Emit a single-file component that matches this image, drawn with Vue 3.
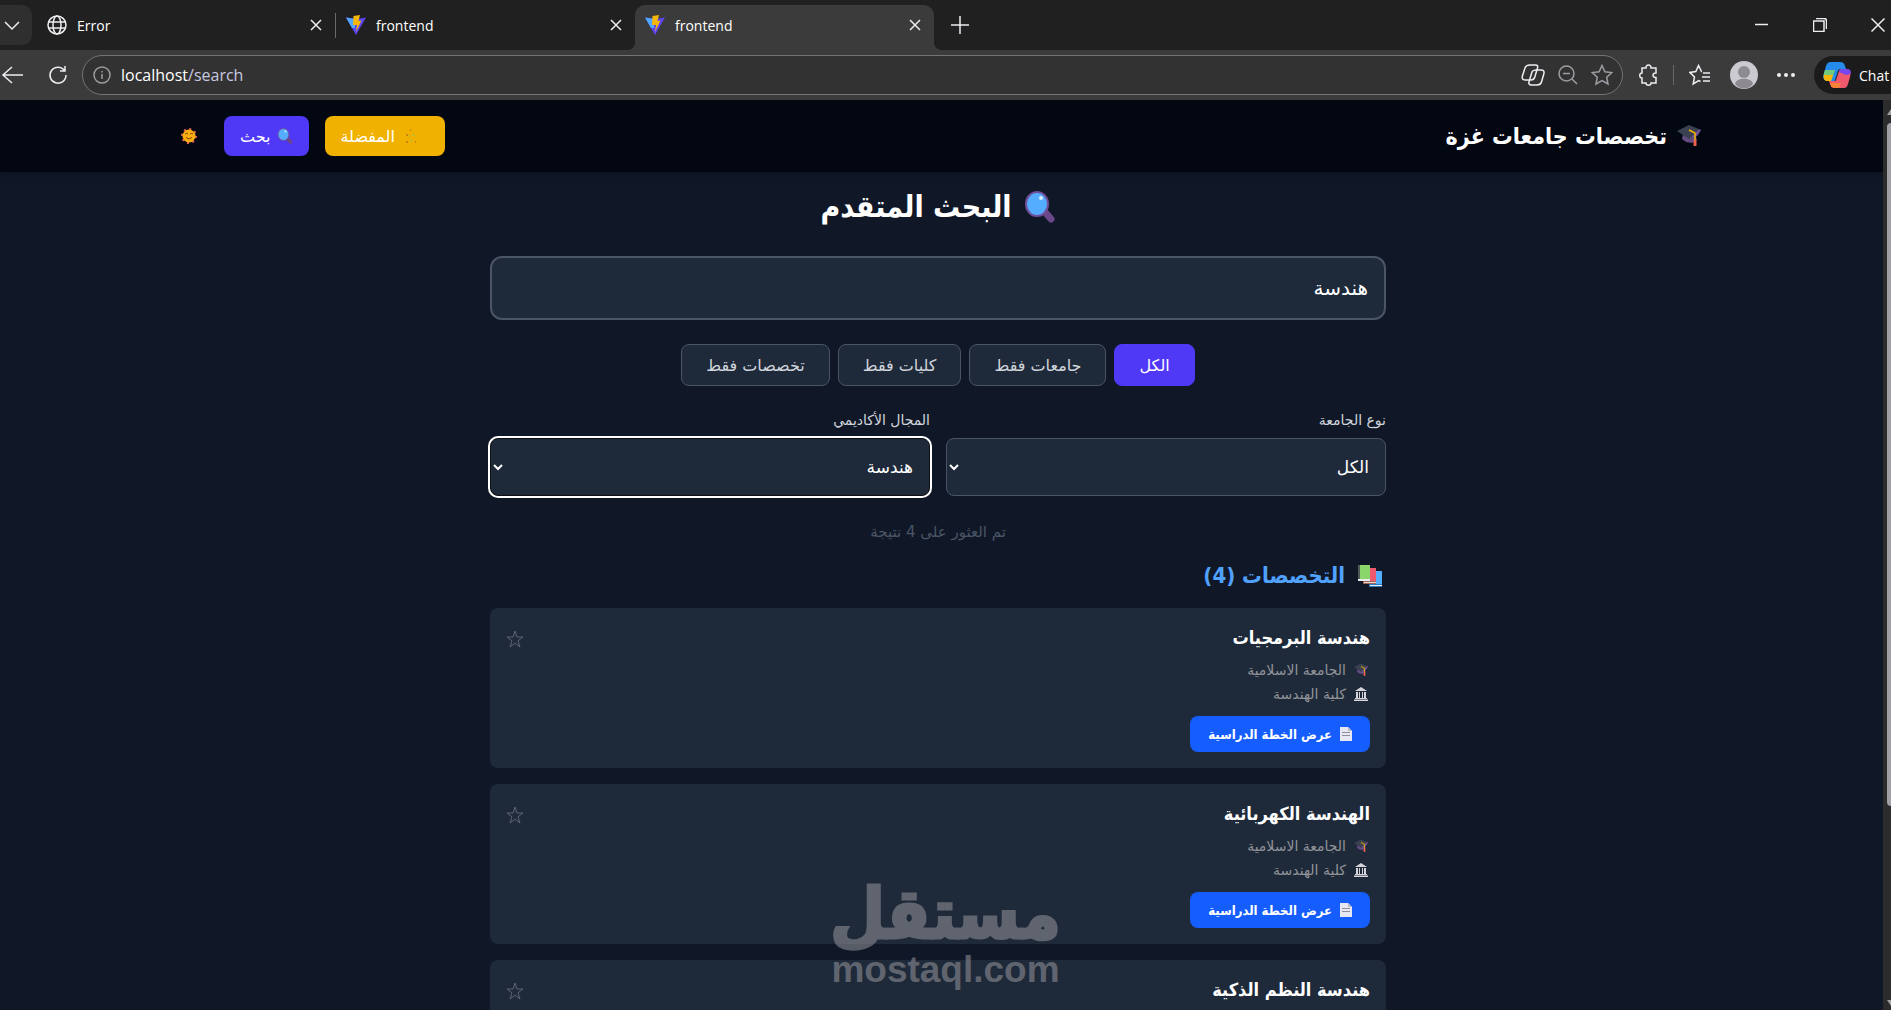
<template>
  <div class="browser">
    <div class="tabstrip">
      <button class="tab-menu" aria-label="Tab actions">
        <svg width="16" height="16" viewBox="0 0 16 16"><path d="M1 5l7 7 7-7" /></svg>
      </button>
      <div v-for="(tab, i) in tabs" :key="i" class="tab" :class="{ active: tab.active, divided: tab.divided }">
        <svg v-if="tab.icon === 'globe'" class="favicon" viewBox="0 0 20 20">
          <circle cx="10" cy="10" r="9" />
          <ellipse cx="10" cy="10" rx="4" ry="9" />
          <path d="M2 7h16M2 13h16" />
        </svg>
        <svg v-else class="favicon vite" viewBox="0 0 20 20">
          <path d="M0 2.500L10 20 20 2.500 11 4z" fill="#5b45f0" />
          <path d="M0 2.500L9 4 9 13 6 13z" fill="#51a8ff" />
          <path d="M7.500 1L14 0l-1.500 6 3-.5L10 17l1-7H7z" fill="#f5b50a" />
        </svg>
        <span class="tab-title">{{ tab.title }}</span>
        <button class="tab-close" aria-label="Close tab">
          <svg width="12" height="12" viewBox="0 0 12 12"><path d="M1 1l10 10M11 1L1 11" /></svg>
        </button>
      </div>
      <button class="new-tab" aria-label="New tab">
        <svg width="20" height="20" viewBox="0 0 20 20"><path d="M10 1v18M1 10h18" /></svg>
      </button>
      <div class="window-controls">
        <button aria-label="Minimize"><svg width="14" height="14" viewBox="0 0 14 14"><path d="M0 6.500h13" /></svg></button>
        <button aria-label="Restore">
          <svg width="14" height="14" viewBox="0 0 14 14"><path d="M.5 3h10.500v10.500H.5zM3 .5h8q2.500 0 2.500 2.500v8" /></svg>
        </button>
        <button aria-label="Close"><svg width="14" height="14" viewBox="0 0 14 14"><path d="M.5.500l13 13M13.500.500l-13 13" /></svg></button>
      </div>
    </div>

    <div class="toolbar">
      <button class="tool back" aria-label="Back">
        <svg width="24" height="20" viewBox="0 0 24 20"><path d="M12 2L3 10l9 8M3 10h20" /></svg>
      </button>
      <button class="tool reload" aria-label="Reload">
        <svg width="20" height="20" viewBox="0 0 20 20"><path d="M16.500 5.500A8 8 0 1 0 18 10M17 1v5h-5" /></svg>
      </button>
      <div class="address">
        <svg class="info" width="18" height="18" viewBox="0 0 18 18"><circle cx="9" cy="9" r="8" /><path d="M9 8v5M9 5v1.500" /></svg>
        <span class="url">localhost<span>/search</span></span>
        <svg width="24" height="22" viewBox="0 0 24 22">
          <path d="M9 1h5.500c2 0 2.500 1 2 3l-2.700 9c-.6 2-1.800 3-3.800 3H4c-2.500 0-3.200-1.500-2.600-4L4 4c.6-2 2-3 5-3z" />
          <path d="M16 6h4c2.800 0 3.500 1.500 2.800 4L20.500 18c-.6 2-2 3-4.500 3h-5.500c-2.500 0-3-1.500-2.400-3.500L11 8c.5-1.500 1.500-2 5-2z" />
        </svg>
        <svg class="dim" width="20" height="20" viewBox="0 0 20 20"><circle cx="8.500" cy="8.500" r="7.500" /><path d="M14 14l5 5M5 8.500h7" /></svg>
        <svg class="dim" width="22" height="22" viewBox="0 0 22 22"><path d="M11 1.500l2.900 6.300 6.800.8-5 4.600 1.300 6.800-6-3.400L5 20l1.300-6.800-5-4.600 6.800-.8z" /></svg>
      </div>
      <button class="tool" aria-label="Extensions">
        <svg width="20" height="22" viewBox="0 0 20 22">
          <path d="M3 4h4c-.5-4 5.500-4 5 0h5v5c-4-.5-4 5 0 4.500V19h-5c.5 3-5.500 3-5 0H3v-5c-3 .3-3-5.300 0-5z" />
        </svg>
      </button>
      <i class="tool-divider"></i>
      <button class="tool" aria-label="Favorites">
        <svg width="22" height="22" viewBox="0 0 22 22"><path d="M13 7.500h-.5L9.500 1.500 6.800 7.500.800 8.400l4.700 4.500L4.200 20l5.500-3.500 1.800 1M14 9h7M13 13h8M14 17h7" /></svg>
      </button>
      <button class="tool" aria-label="Profile">
        <svg class="avatar" width="28" height="28" viewBox="0 0 28 28">
          <circle cx="14" cy="14" r="14" fill="#cbcad0" />
          <circle cx="14" cy="11" r="6" fill="#8d8b91" />
          <path d="M5 23c1-7 17-7 18 0-5 6-13 6-18 0z" fill="#8d8b91" />
        </svg>
      </button>
      <button class="tool" aria-label="Settings">
        <svg width="18" height="4" viewBox="0 0 18 4"><g fill="#ededf2" stroke="none"><circle cx="2" cy="2" r="2" /><circle cx="9" cy="2" r="2" /><circle cx="16" cy="2" r="2" /></g></svg>
      </button>
      <button class="chat">
        <svg width="28" height="28" viewBox="0 0 28 28">
          <path d="M8 1h9c3 0 4 1 5 4l1 3h-6c-1 0-2 1-2 2l-3 9c0 1-1 1-2 1H5c-5 0-5-4-4-8l2-7c1-3 2-4 5-4z" fill="#258bea" />
          <path d="M2 9h10l-2 6-2 5H5c-5 0-5-4-4-8z" fill="#72ca7c" />
          <path d="M1 14h9l-2 6H5c-3 0-5-2-4-6z" fill="#f5b50a" />
          <path d="M19 8h4c5 0 5 4 4 8l-2 7c-1 3-2 4-4 4h-9c-3 0-4-1-5-4l-1-3h5c1 0 2 0 2-1l3-9c0-1 1-2 3-2z" fill="#ef596d" />
          <path d="M19 8h4c5 0 5 2 4.500 5L23 14l-7-3c0-2 1-3 3-3z" fill="#7746ee" />
          <path d="M7 22h11l-2 5h-4c-3 0-4-2-5-5z" fill="#f68235" />
        </svg>
        <span>Chat</span>
      </button>
    </div>

    <div class="viewport">
      <div class="page" dir="rtl" lang="ar">
        <header class="navbar">
          <div class="navbar-inner">
            <a class="brand" href="#">
              <svg width="24" height="24" viewBox="0 0 24 24"><use href="#cap" /></svg>
              <span>تخصصات جامعات غزة</span>
            </a>
            <nav>
              <a class="nav-btn fav" href="#">
                <svg width="16" height="16" viewBox="0 0 16 16">
                  <path d="M3 6l2 2M7 2h1M3 14h2M12 14h1" stroke="#9a5a1a" fill="none" />
                  <path d="M11 6l-1 2M6 8h1M7 13h2" stroke="#8fc46a" fill="none" />
                </svg>
                <span>المفضلة</span>
              </a>
              <a class="nav-btn search" href="#">
                <svg width="16" height="16" viewBox="0 0 32 32"><use href="#lens" /></svg>
                <span>بحث</span>
              </a>
              <button class="theme" aria-label="تبديل المظهر">
                <svg width="16" height="16" viewBox="0 0 16 16">
                  <circle cx="8" cy="8" r="7" fill="none" stroke="#f0605a" stroke-width="2" stroke-dasharray="2 3.500" />
                  <circle cx="8" cy="8" r="6.500" fill="#f8b010" />
                  <path d="M4 6q1.500-1.500 3 0M9 6q1.500-1.500 3 0M5 9.500q3 3 6 0" stroke="#85400f" fill="none" />
                </svg>
              </button>
            </nav>
          </div>
        </header>

        <main>
          <h1>
            <svg width="32" height="32" viewBox="0 0 32 32"><use href="#lens" /></svg>
            <span>البحث المتقدم</span>
          </h1>

          <input v-model="query" class="search-box" type="text" aria-label="بحث" />

          <div class="filters">
            <button v-for="f in filters" :key="f" :class="{ selected: f === filter }" @click="filter = f">{{ f }}</button>
          </div>

          <div class="selects">
            <div class="field">
              <label for="uni-type">نوع الجامعة</label>
              <select id="uni-type" v-model="uniType"><option>الكل</option></select>
            </div>
            <div class="field">
              <label for="area">المجال الأكاديمي</label>
              <select id="area" v-model="area" class="focused"><option>هندسة</option></select>
            </div>
          </div>

          <p class="count">تم العثور على 4 نتيجة</p>

          <h2>
            <svg width="26" height="24" viewBox="0 0 26 24">
              <path d="M12 7h13v14H12z" fill="#54adff" /><path d="M12 20h13v3H12z" fill="#267abd" /><path d="M13 21h12v1H13z" fill="#e9edf2" />
              <path d="M6 4h13v14H6z" fill="#ef596d" /><path d="M6 17h13v3H6z" fill="#9b6558" /><path d="M7 18h12v1H7z" fill="#e9d8d5" />
              <path d="M1 1h12v14H1z" fill="#8bd66a" /><path d="M1 1h2v15H1z" fill="#4d5a55" /><path d="M1 15h12v2H1z" fill="#e9edf2" />
            </svg>
            <span>التخصصات (4)</span>
          </h2>

          <article v-for="m in majors" :key="m" class="card">
            <div class="card-body">
              <h3>{{ m }}</h3>
              <p class="meta">
                <svg width="14" height="14" viewBox="0 0 24 24"><use href="#cap" /></svg>
                <span>الجامعة الاسلامية</span>
              </p>
              <p class="meta">
                <svg width="14" height="14" viewBox="0 0 14 14">
                  <path d="M7 0l6 4H1zM2 5h2v6H2zM5 5h1v6H5zM8 5h1v6H8zM10 5h2v6h-2zM1 11h12v1H1zM0 12.500h14V14H0z" fill="#d5d4da" />
                </svg>
                <span>كلية الهندسة</span>
              </p>
              <a class="plan" href="#">
                <svg width="12" height="14" viewBox="0 0 12 14">
                  <path d="M0 0h8l4 4v10H0z" fill="#e6e7f3" /><path d="M8 0v4h4z" fill="#b8bacb" /><path d="M2 5.500h8M2 8.500h8" stroke="#8b8e9d" />
                </svg>
                <span>عرض الخطة الدراسية</span>
              </a>
            </div>
            <button class="star" aria-label="إضافة إلى المفضلة">
              <svg width="18" height="18" viewBox="0 0 18 18"><path d="M9 1l1.900 6H17l-5 3.800 2 6.200-5-3.800L4 17l2-6.200L1 7h6.100z" /></svg>
            </button>
          </article>
        </main>
      </div>
      <div class="scrollbar"><i class="up"></i><i class="thumb"></i><i class="down"></i></div>
    </div>

    <div class="watermark">
      <span class="ar" lang="ar">مستقل</span>
      <span class="en">mostaql.com</span>
    </div>

    <!-- shared symbols -->
    <svg class="symbols" aria-hidden="true">
      <symbol id="cap" viewBox="0 0 24 24">
        <path d="M6 10h12l2 6-5 3-6-1-4-3z" fill="#634a80" />
        <path d="M0 7l12-6 12 5-4 6-8 3z" fill="#3a4150" />
        <path d="M12 15l8-3 4-6-2-.5-8 8z" fill="#74539a" />
        <path d="M12 6l6 3v8" stroke="#f8b500" stroke-width="1.500" fill="none" />
        <path d="M16.500 16h3v6h-3z" fill="#ef6050" />
      </symbol>
      <symbol id="lens" viewBox="0 0 32 32">
        <path d="M21 21l6 7" stroke="#6b478a" stroke-width="7" stroke-linecap="round" />
        <ellipse cx="13" cy="13" rx="11" ry="12" fill="#54adff" stroke="#70509a" stroke-width="2" />
        <circle cx="17" cy="7" r="2" fill="#d8edff" />
      </symbol>
    </svg>
  </div>
</template>

<script setup>
import { ref } from 'vue'

const tabs = [
  { title: 'Error', icon: 'globe', divided: true },
  { title: 'frontend', icon: 'vite' },
  { title: 'frontend', icon: 'vite', active: true },
]

const query = ref('هندسة')
const uniType = ref('الكل')
const area = ref('هندسة')

const filters = ['الكل', 'جامعات فقط', 'كليات فقط', 'تخصصات فقط']
const filter = ref('الكل')

const majors = ['هندسة البرمجيات', 'الهندسة الكهربائية', 'هندسة النظم الذكية']
</script>

<style>
body { margin: 0; background: #101828; }
</style>

<style scoped>
* { box-sizing: border-box; }

button, input, select { font: inherit; }
button { border: 0; background: none; padding: 0; color: inherit; cursor: pointer; }
a { color: inherit; text-decoration: none; }
h1, h2, h3, p { margin: 0; }
svg { flex: none; }

.browser {
  position: relative;
  display: flex;
  flex-direction: column;
  height: 100vh;
  overflow: hidden;
  font-family: "Open Sans", "Noto Sans", sans-serif;
  color: #fff;
}
.symbols { position: absolute; width: 0; height: 0; }

/* browser chrome */
.tabstrip {
  display: flex;
  align-items: center;
  height: 50px;
  background: #202020;
  flex: none;
}
.tabstrip svg, .toolbar svg { fill: none; stroke: #ededf2; stroke-width: 1.5; display: block; }
.tabstrip .vite, .toolbar .chat svg, .toolbar .avatar { stroke: none; }

.tab-menu {
  width: 32px;
  height: 40px;
  padding-left: 4px;
  border-radius: 0 10px 10px 0;
  background: #2f2f2f;
}
.tab {
  position: relative;
  display: flex;
  align-items: center;
  gap: 10px;
  width: 299px;
  height: 40px;
  padding: 0 13px 0 10px;
  font-size: 14px;
}
.tab-menu + .tab { margin-left: 5px; }
.divided { border-right: 1px solid #6b6b6b; height: 25px; }
.active {
  height: 45px;
  padding-bottom: 5px;
  align-self: flex-end;
  background: #3b3b3b;
  border-radius: 10px 10px 0 0;
}
/* flared feet of the active tab */
.active::before, .active::after {
  content: "";
  position: absolute;
  bottom: 0;
  width: 8px;
  height: 8px;
}
.active::before { left: -8px; background: radial-gradient(circle at 0 0, transparent 8px, #3b3b3b 8px); }
.active::after { right: -8px; background: radial-gradient(circle at 100% 0, transparent 8px, #3b3b3b 8px); }
.favicon { width: 20px; height: 20px; }
.tab-title { flex: 1; }
.new-tab { margin-left: 16px; }
.window-controls { display: flex; gap: 44px; margin-left: auto; padding-right: 6px; }

.toolbar {
  display: flex;
  align-items: center;
  height: 50px;
  background: #3b3b3b;
  flex: none;
  overflow: hidden;
}
.toolbar > * { flex: none; }
.reload { margin: 0 14px 0 24px; }
.toolbar .address {
  display: flex;
  align-items: center;
  gap: 13px;
  flex: 1;
  height: 40px;
  margin-right: 16px;
  padding: 0 9px 0 10px;
  border: 1px solid #73737a;
  border-radius: 20px;
  background: #323232;
}
.url { flex: 1; margin-left: -3px; font-size: 16px; }
.url span { color: #c9c9e0; }
.toolbar .dim, .toolbar .info { stroke: #9c9ca2; }
.tool-divider { width: 1px; height: 20px; margin: 0 15px 0 14px; background: #66666c; }
.tool-divider ~ .tool { margin-right: 19px; }
.chat {
  display: flex;
  align-items: center;
  gap: 8px;
  width: 77px;
  height: 38px;
  padding-left: 9px;
  border-radius: 19px 0 0 19px;
  background: #1b1b1b;
  font-size: 14px;
}

/* page */
.viewport { display: flex; flex: 1; min-height: 0; }
.page {
  flex: 1;
  overflow: hidden;
  background: #101828;
  font-family: "DejaVu Sans", sans-serif;
  font-size: 16px;
}
.scrollbar {
  display: flex;
  flex-direction: column;
  align-items: flex-end;
  width: 8px;
  overflow: hidden;
  background: #2c2c2c;
}
.scrollbar i { flex: none; }
.up, .down { width: 4px; height: 6px; background: #9f9fa5; }
.up { margin: 9px 0 8px; clip-path: polygon(100% 0, 100% 100%, 0 100%); }
.down { margin: auto 0 4px; clip-path: polygon(0 0, 100% 0, 100% 100%); }
.thumb { width: 4px; height: 75%; border-radius: 4px 0 0 4px; background: #9f9fa5; }

.navbar {
  padding-right: 7px;
  background: #030712;
  box-shadow: 0 2px 6px rgba(0, 0, 0, 0.3);
}
.navbar-inner {
  display: flex;
  align-items: center;
  justify-content: space-between;
  max-width: 1526px;
  height: 72px;
  margin: 0 auto;
}
.brand { display: flex; align-items: center; gap: 10px; font-size: 23px; }
.brand, h1, h2, h3, .plan { font-family: "DejaVu Sans Condensed", "DejaVu Sans", sans-serif; font-weight: 700; }
nav { display: flex; align-items: center; gap: 16px; }
.nav-btn {
  display: flex;
  align-items: center;
  gap: 6px;
  height: 40px;
  padding: 0 16px;
  border-radius: 8px;
}
.nav-btn.fav { gap: 8px; padding-right: 26px; background: #f0b100; }
.nav-btn.search { background: #4f39f6; }
.theme { margin: 0 11px 0 6px; }
.theme svg { display: block; }

main { max-width: 903px; margin: 0 auto; padding-right: 7px; }
h1 {
  display: flex;
  align-items: center;
  justify-content: center;
  gap: 12px;
  padding: 17px 0 31px;
  font-size: 30px;
  line-height: 36px;
}
.search-box {
  display: block;
  width: 100%;
  height: 64px;
  padding: 0 16px;
  border: 2px solid #4a5565;
  border-radius: 12px;
  background: #1e2939;
  color: #fff;
  font-size: 20px;
}
.filters { display: flex; justify-content: center; gap: 8px; margin: 24px 0; }
.filters button {
  height: 42px;
  padding: 0 24px;
  border: 1px solid #4a5565;
  border-radius: 8px;
  background: #1e2939;
  color: #d1d5dc;
}
.filters .selected { background: #4f39f6; border-color: #4f39f6; color: #fff; }

.selects { display: grid; grid-template-columns: 1fr 1fr; gap: 16px; }
.field label { display: block; height: 28px; font-size: 14px; line-height: 20px; color: #d1d5dc; }
select {
  display: block;
  width: 100%;
  height: 58px;
  padding: 0 12px;
  border: 1px solid #4a5565;
  border-radius: 8px;
  background: #1e2939;
  color: #fff;
  font-size: 17px;
}
select.focused { border-color: #101010; box-shadow: 0 0 0 2px #fff; }

.count { margin: 24px 0 16px; text-align: center; font-size: 15px; line-height: 24px; color: #4a5565; }
h2 {
  display: flex;
  align-items: center;
  gap: 12px;
  padding-right: 3px;
  margin-bottom: 16px;
  font-size: 22px;
  line-height: 32px;
  color: #51a2ff;
}
.card {
  display: flex;
  justify-content: space-between;
  align-items: flex-start;
  margin-bottom: 16px;
  padding: 16px;
  border-radius: 8px;
  background: #1e2939;
}
h3 { margin-bottom: 6px; font-size: 18px; line-height: 28px; }
.meta {
  display: flex;
  align-items: center;
  gap: 8px;
  padding-right: 2px;
  font-size: 14px;
  line-height: 24px;
  color: #929499;
}
.plan {
  display: inline-flex;
  align-items: center;
  gap: 8px;
  height: 36px;
  margin-top: 10px;
  padding: 0 18px;
  border-radius: 8px;
  background: #155dfc;
  font-size: 13px;
}
.star { padding: 6px 0; }
.star svg { display: block; fill: none; stroke: #5a6474; }

.watermark {
  position: absolute;
  left: 50%;
  bottom: 18px;
  transform: translateX(-50%);
  display: flex;
  flex-direction: column;
  align-items: center;
  color: #a0a0a5;
  opacity: 0.5;
  font-weight: 700;
  pointer-events: none;
}
.watermark .ar {
  font-family: "DejaVu Sans Condensed", "DejaVu Sans", sans-serif;
  font-size: 70px;
  line-height: 68px;
  -webkit-text-stroke: 3px #a0a0a5;
}
.watermark .en { font-family: "Liberation Sans", sans-serif; font-size: 37px; line-height: 44px; }
</style>
